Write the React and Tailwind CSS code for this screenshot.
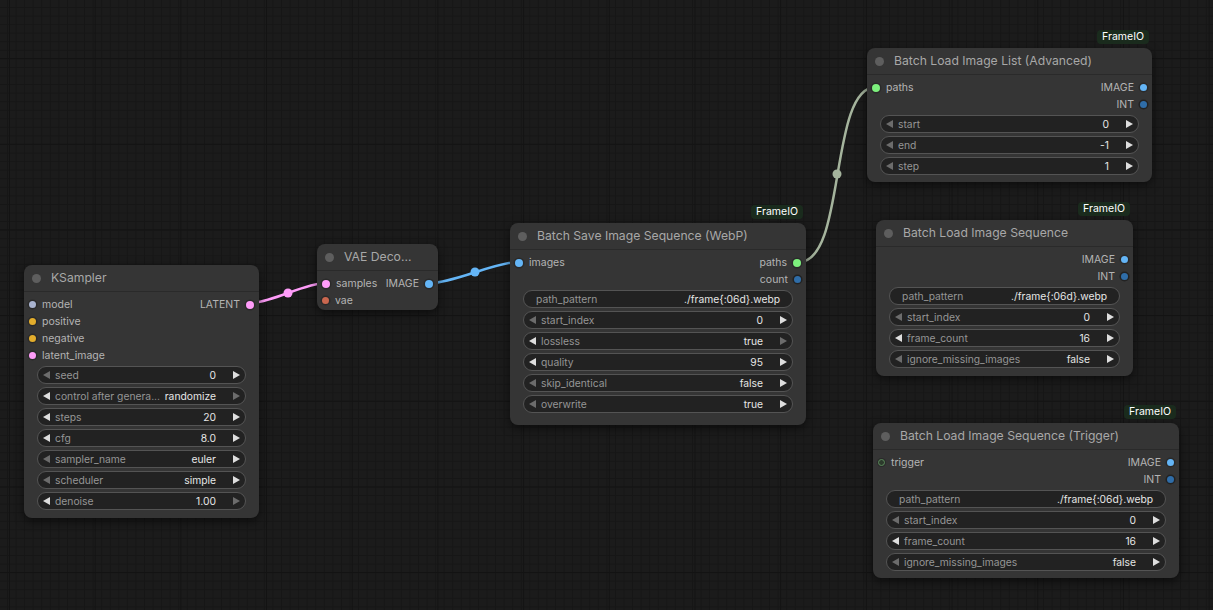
import React from 'react';

// slot colours, written out in full so Tailwind picks them up
const SLOT = {
  model: 'bg-[#a9b3cf] ring-[1.5px] ring-[#2a2a2a]',
  cond: 'bg-[#e3ad2c] ring-[1.5px] ring-[#2a2a2a]',
  latent: 'bg-[#ff9cf9] ring-[1.5px] ring-[#2a2a2a]',
  vae: 'bg-[#c9674f] ring-[1.5px] ring-[#2a2a2a]',
  image: 'bg-[#64b5f6] ring-[1.5px] ring-[#2a2a2a]',
  int: 'bg-[#2f6da8] ring-[1.5px] ring-[#222222]',
  paths: 'bg-[#7df07d] ring-[1.5px] ring-[#2a2a2a]',
  trigger: 'bg-[#2c3a2c] border border-[#5b8a5b] ring-[1px] ring-[#2a2a2a]',
};

const Dot = ({ type, big }) => (
  <span
    className={`shrink-0 rounded-full ${big ? 'w-[8px] h-[8px]' : 'w-[7px] h-[7px]'} ${SLOT[type]}`}
  />
);

const Arrow = ({ dir, on }) => (
  <svg width="7" height="8" viewBox="0 0 7 8" className="shrink-0">
    <polygon points={dir === 'l' ? '7,0 7,8 0,4' : '0,0 0,8 7,4'} fill={on ? '#dedede' : '#6c6c6c'} />
  </svg>
);

const SlotRow = ({ input, output }) => (
  <div className="h-[17px] flex items-center justify-between text-[10.5px]">
    {input ? (
      <div className="flex items-center gap-[6px] pl-[5px]">
        <Dot type={input.type} big={input.linked} />
        <span className="text-[#b4b4b4]">{input.name}</span>
      </div>
    ) : (
      <span />
    )}
    {output && (
      <div className="flex items-center gap-[6px] pr-[5px]">
        <span className="text-[#b4b4b4]">{output.name}</span>
        <Dot type={output.type} big={output.linked} />
      </div>
    )}
  </div>
);

const Widget = ({ label, value, l, r, text }) => (
  <div className="h-[18px] shrink-0 rounded-full border border-[#545454] bg-[#222222] flex items-center text-[10.3px] leading-none">
    {text ? (
      <>
        <span className="pl-[12px] text-[#959595]">{label}</span>
        <span className="ml-auto pr-[12px] text-[#e6e6e6]">{value}</span>
      </>
    ) : (
      <>
        <span className="pl-[5px]" />
        <Arrow dir="l" on={l} />
        <span className="ml-[5px] text-[#959595] whitespace-nowrap">{label}</span>
        <span className="ml-auto pl-[4px] mr-[17px] text-[#e6e6e6] whitespace-nowrap">{value}</span>
        <Arrow dir="r" on={r} />
        <span className="pr-[5px]" />
      </>
    )}
  </div>
);

const Node = ({ className, title, badge, rows = [], widgets = [] }) => (
  <div className={`absolute flex flex-col rounded-[8px] bg-[#353535] shadow-[0_3px_10px_rgba(0,0,0,0.55)] ${className}`}>
    {badge && (
      <div className="absolute -top-[18px] right-[3px] h-[14px] px-[5px] rounded-[4px] bg-[#1a2b1d] text-white text-[10.5px] leading-[14px]">
        FrameIO
      </div>
    )}
    <div className="h-[27px] shrink-0 flex items-center pl-[8px] gap-[10px] border-b border-[#2a2a2a]">
      <span className="w-[9px] h-[9px] rounded-full bg-[#5e5e5e]" />
      <span className="text-[12.2px] text-[#a8a8a8] whitespace-nowrap">{title}</span>
    </div>
    <div className="pt-[4px] flex flex-col">
      {rows.map((row, i) => (
        <SlotRow key={i} input={row[0]} output={row[1]} />
      ))}
    </div>
    {widgets.length > 0 && (
      <div className="mt-[2px] flex flex-col gap-[3px] px-[13px]">
        {widgets.map((w, i) => (
          <Widget key={i} {...w} />
        ))}
      </div>
    )}
  </div>
);

const seqWidgets = [
  { label: 'path_pattern', value: './frame{:06d}.webp', text: true },
  { label: 'start_index', value: '0', l: false, r: true },
  { label: 'frame_count', value: '16', l: true, r: true },
  { label: 'ignore_missing_images', value: 'false', l: false, r: true },
];

const link = (x1, y1, x2, y2) => {
  const d = Math.hypot(x2 - x1, y2 - y1) * 0.25;
  return `M${x1},${y1} C${x1 + d},${y1} ${x2 - d},${y2} ${x2},${y2}`;
};

export default function App() {
  return (
    <div className="relative w-[1213px] h-[610px] overflow-hidden bg-[#1b1b1b] bg-[image:linear-gradient(to_right,#131313_1px,transparent_1px),linear-gradient(to_bottom,#131313_1px,transparent_1px),linear-gradient(to_right,#161616_1px,transparent_1px),linear-gradient(to_bottom,#161616_1px,transparent_1px)] bg-[size:85.7px_85.7px,85.7px_85.7px,8.57px_8.57px,8.57px_8.57px] bg-[position:9px_58px,9px_58px,7px_7px,7px_7px] font-['Inter','Liberation_Sans',sans-serif]">
      <svg className="absolute inset-0" width="1213" height="610">
        <path d={link(251, 303, 325, 283)} stroke="#ff9cf9" strokeWidth="2.5" fill="none" />
        <circle cx="288" cy="293" r="4.5" fill="#ff9cf9" />
        <path d={link(431, 283, 518, 262)} stroke="#64b5f6" strokeWidth="2.5" fill="none" />
        <circle cx="475" cy="272" r="4.5" fill="#64b5f6" />
        <path d={link(799, 262, 876, 87)} stroke="#a5b49d" strokeWidth="2.5" fill="none" />
        <circle cx="837" cy="174" r="4.5" fill="#a5b49d" />
      </svg>

      <Node
        className="left-[24px] top-[265px] w-[235px] h-[253px]"
        title="KSampler"
        rows={[
          [{ name: 'model', type: 'model' }, { name: 'LATENT', type: 'latent', linked: true }],
          [{ name: 'positive', type: 'cond' }],
          [{ name: 'negative', type: 'cond' }],
          [{ name: 'latent_image', type: 'latent' }],
        ]}
        widgets={[
          { label: 'seed', value: '0', l: false, r: true },
          { label: 'control after genera...', value: 'randomize', l: true, r: false },
          { label: 'steps', value: '20', l: true, r: true },
          { label: 'cfg', value: '8.0', l: true, r: true },
          { label: 'sampler_name', value: 'euler', l: false, r: true },
          { label: 'scheduler', value: 'simple', l: false, r: true },
          { label: 'denoise', value: '1.00', l: true, r: false },
        ]}
      />

      <Node
        className="left-[317px] top-[244px] w-[121px] h-[66px]"
        title="VAE Deco..."
        rows={[
          [{ name: 'samples', type: 'latent', linked: true }, { name: 'IMAGE', type: 'image', linked: true }],
          [{ name: 'vae', type: 'vae' }],
        ]}
      />

      <Node
        className="left-[510px] top-[223px] w-[296px] h-[202px]"
        title="Batch Save Image Sequence (WebP)"
        badge
        rows={[
          [{ name: 'images', type: 'image', linked: true }, { name: 'paths', type: 'paths', linked: true }],
          [null, { name: 'count', type: 'int' }],
        ]}
        widgets={[
          { label: 'path_pattern', value: './frame{:06d}.webp', text: true },
          { label: 'start_index', value: '0', l: false, r: true },
          { label: 'lossless', value: 'true', l: true, r: false },
          { label: 'quality', value: '95', l: true, r: true },
          { label: 'skip_identical', value: 'false', l: false, r: true },
          { label: 'overwrite', value: 'true', l: false, r: true },
        ]}
      />

      <Node
        className="left-[867px] top-[48px] w-[285px] h-[134px]"
        title="Batch Load Image List (Advanced)"
        badge
        rows={[
          [{ name: 'paths', type: 'paths', linked: true }, { name: 'IMAGE', type: 'image' }],
          [null, { name: 'INT', type: 'int' }],
        ]}
        widgets={[
          { label: 'start', value: '0', l: false, r: true },
          { label: 'end', value: '-1', l: false, r: true },
          { label: 'step', value: '1', l: false, r: true },
        ]}
      />

      <Node
        className="left-[876px] top-[220px] w-[257px] h-[156px]"
        title="Batch Load Image Sequence"
        badge
        rows={[
          [null, { name: 'IMAGE', type: 'image' }],
          [null, { name: 'INT', type: 'int' }],
        ]}
        widgets={seqWidgets}
      />

      <Node
        className="left-[873px] top-[423px] w-[306px] h-[155px]"
        title="Batch Load Image Sequence (Trigger)"
        badge
        rows={[
          [{ name: 'trigger', type: 'trigger' }, { name: 'IMAGE', type: 'image' }],
          [null, { name: 'INT', type: 'int' }],
        ]}
        widgets={seqWidgets}
      />
    </div>
  );
}
